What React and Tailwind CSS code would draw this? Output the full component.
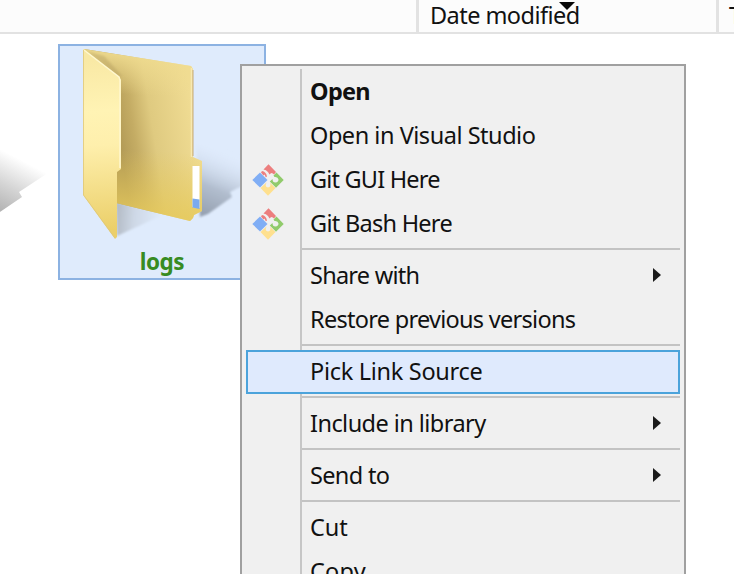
import React from "react";

const ITEMS = [
  { label: "Open", bold: true, fit: "tracking-[-0.7px]" },
  { label: "Open in Visual Studio", fit: "tracking-[-0.47px]" },
  { label: "Git GUI Here", icon: true, fit: "tracking-[-0.8px]" },
  { label: "Git Bash Here", icon: true, fit: "tracking-[-0.72px]" },
  null,
  { label: "Share with", sub: true, fit: "tracking-[-0.75px]" },
  { label: "Restore previous versions", fit: "tracking-[-0.72px]" },
  null,
  { label: "Pick Link Source", active: true, fit: "tracking-[-0.3px]" },
  null,
  { label: "Include in library", sub: true, fit: "tracking-[-0.55px]" },
  null,
  { label: "Send to", sub: true, fit: "tracking-[-0.65px]" },
  null,
  { label: "Cut", fit: "tracking-[0px]" },
  { label: "Copy", fit: "tracking-[0.2px]" },
];

function GitIcon() {
  return (
    <svg width="32" height="32" viewBox="0 0 32 32" className="block">
      <path d="M8 8.500L15.500 16L8 23.500L0.300 16Z" fill="#80aef5" />
      <path d="M16.500 0.300L24 8L22 10.500Q19.500 7.500 17.500 10.500L16 8Q14 5.500 11.500 5.500Z" fill="#ec7e7e" />
      <path d="M10 7Q14 7.500 15 12.500L13.800 13.200L12.500 10.500L11.500 11.500L9 8.500Z" fill="#ec7e7e" />
      <path d="M24.500 8.500L31.700 16L24 23.700L17.800 17.500L20.500 15Q20.500 18.500 23.500 18.500Q26.500 18 26.500 15.500Q26 12.500 22.500 13L21.500 11.500Z" fill="#91cb6c" />
      <path d="M8.500 24L14.500 18.500Q12.500 23 16 23.500Q19.500 23 18 18.800L23.500 24L16 31.700Z" fill="#fee08f" />
    </svg>
  );
}

function FolderIcon() {
  return (
    <svg width="180" height="200" viewBox="60 46 180 200" className="block">
      <defs>
        <linearGradient id="back" gradientUnits="userSpaceOnUse" x1="118" y1="130" x2="194" y2="118">
          <stop offset="0" stopColor="#b39b56" />
          <stop offset="0.2" stopColor="#c4ac64" />
          <stop offset="0.45" stopColor="#dfca80" />
          <stop offset="1" stopColor="#f0dc93" />
        </linearGradient>
        <linearGradient id="backGlow" gradientUnits="userSpaceOnUse" x1="156" y1="56" x2="150" y2="215">
          <stop offset="0" stopColor="#f0dc90" stopOpacity="0.9" />
          <stop offset="0.25" stopColor="#f0dc90" stopOpacity="0" />
          <stop offset="0.6" stopColor="#e6ca5c" stopOpacity="0" />
          <stop offset="1" stopColor="#e6ca5c" stopOpacity="0.85" />
        </linearGradient>
        <linearGradient id="front" gradientUnits="userSpaceOnUse" x1="98" y1="60" x2="110" y2="230">
          <stop offset="0" stopColor="#f9e9a5" />
          <stop offset="0.3" stopColor="#fff3b4" />
          <stop offset="0.5" stopColor="#feefac" />
          <stop offset="1" stopColor="#ebcf69" />
        </linearGradient>
        <linearGradient id="shade" gradientUnits="userSpaceOnUse" x1="200" y1="212" x2="226" y2="150">
          <stop offset="0" stopColor="#97a2b2" />
          <stop offset="0.4" stopColor="#b1bdce" />
          <stop offset="1" stopColor="#dfebfc" stopOpacity="0" />
        </linearGradient>
        <linearGradient id="floor" gradientUnits="userSpaceOnUse" x1="116" y1="215" x2="162" y2="218">
          <stop offset="0" stopColor="#b2bac4" />
          <stop offset="0.4" stopColor="#ced8e6" />
          <stop offset="1" stopColor="#dfebfc" />
        </linearGradient>
        <filter id="soft" x="-10%" y="-10%" width="120%" height="120%">
          <feGaussianBlur stdDeviation="0.8" />
        </filter>
      </defs>
      <path d="M196 144H244V185L230 192L232 197L208 214L200 217Z" fill="url(#shade)" filter="url(#soft)" />
      <path d="M116 202L165 214L117 236Z" fill="url(#floor)" filter="url(#soft)" />
      <path d="M84 49L191 66L193 69V157L202 161V211L194 215L193 218L190 221L116 203Z" fill="url(#back)" />
      <path d="M84 49L191 66L193 69V157L202 161V211L194 215L193 218L190 221L116 203Z" fill="url(#backGlow)" />
      <path d="M86 51L104 56L122 76L119 77Z" fill="#b39d5e" filter="url(#soft)" opacity="0.4" />
      <path d="M191.500 68V157" stroke="#f8e8b1" strokeWidth="1.500" />
      <path d="M193 70V156" stroke="#c5a979" strokeWidth="1" />
      <path d="M192.500 166H199.500V208L192.500 207Z" fill="#fff" />
      <path d="M192.500 198.500L199.500 199.500V209L192.500 207.500Z" fill="#7aaaf0" />
      <path d="M83 49L119 77L121 80V169L117 172V237L115 239L83 195Z" fill="url(#front)" />
      <path d="M84 50L119 77L120 80V168" fill="none" stroke="#fff8cf" strokeWidth="1.500" />
      <path d="M83.500 50V195L115 238" fill="none" stroke="#dec67a" strokeWidth="0.800" />
    </svg>
  );
}

function MenuItem({ item }) {
  return (
    <div
      className={
        "flex h-11 shrink-0 items-center border-2 " +
        (item.active ? "relative border-[#4ba3db] bg-[#dfeafd]" : "border-transparent")
      }
    >
      <div className="flex w-[62px] shrink-0 pl-1">{item.icon && <GitIcon />}</div>
      <div className={"whitespace-nowrap pb-[2px] text-[23.5px] leading-[42px] " + item.fit + (item.bold ? " font-bold" : "")}>
        {item.label}
      </div>
      {item.sub && (
        <svg width="8" height="14" viewBox="0 0 8 14" className="mb-[2px] ml-auto mr-[17px]">
          <path d="M0 0L8 7L0 14Z" fill="#1b1b1b" />
        </svg>
      )}
    </div>
  );
}

export default function App() {
  return (
    <div className="relative flex h-[574px] w-[734px] flex-col overflow-hidden bg-white font-['Noto_Sans','Open_Sans',sans-serif] text-[#111]">
      <header className="flex h-[34px] shrink-0 border-b-2 border-[#e2e2e2] bg-[#fcfcfc] text-[23.5px] leading-[31px]">
        <div className="w-[419px] shrink-0 border-r-[3px] border-[#e2e2e2]" />
        <div className="relative w-[300px] shrink-0 border-r-[3px] border-[#e2e2e2] pl-[11px] tracking-[-0.55px]">
          <span>Date modified</span>
          <svg width="16" height="8" viewBox="0 0 16 8" className="absolute left-[140px] top-[2px]">
            <path d="M0 0H16L8 8Z" fill="#080808" />
          </svg>
        </div>
        <div className="shrink-0 pl-[10px]">T</div>
      </header>

      <main className="flex pt-[10px]">
        <div className="w-[58px] pt-[104px]">
          <svg width="50" height="68" viewBox="0 148 50 68" className="block">
            <defs>
              <linearGradient id="neighbour" gradientUnits="userSpaceOnUse" x1="0" y1="210" x2="25" y2="162">
                <stop offset="0" stopColor="#b4b4b4" />
                <stop offset="0.45" stopColor="#d4d4d4" />
                <stop offset="1" stopColor="#fff" />
              </linearGradient>
              <filter id="soften" x="-10%" y="-10%" width="120%" height="120%">
                <feGaussianBlur stdDeviation="0.7" />
              </filter>
            </defs>
            <path d="M-6 148L20 148L48 173L19 192L22 197L-6 216Z" fill="url(#neighbour)" filter="url(#soften)" />
          </svg>
        </div>
        <div className="flex h-[236px] w-[208px] flex-col border-2 border-[#8cb2e2] bg-[#dfebfc]">
          <FolderIcon />
          <div className="h-[32px] pt-px text-center text-[22.5px] font-bold leading-[30px] tracking-[-0.5px] text-[#378b22]">logs</div>
        </div>
      </main>

      <div className="absolute left-[240px] top-[64px] flex h-[540px] w-[446px] flex-col border-2 border-[#a0a0a0] bg-[#f0f0f0] pl-1 pr-1 pt-1">
        <div className="absolute bottom-0 left-[58px] top-[3px] w-[2px] bg-[#c6c6c6]" />
        {ITEMS.map((item, i) =>
          item ? (
            <MenuItem key={i} item={item} />
          ) : (
            <div key={i} className="h-2 shrink-0 pl-[54px] pt-[2px]">
              <div className="h-[2px] bg-[#c3c3c3]" />
            </div>
          )
        )}
      </div>
    </div>
  );
}
